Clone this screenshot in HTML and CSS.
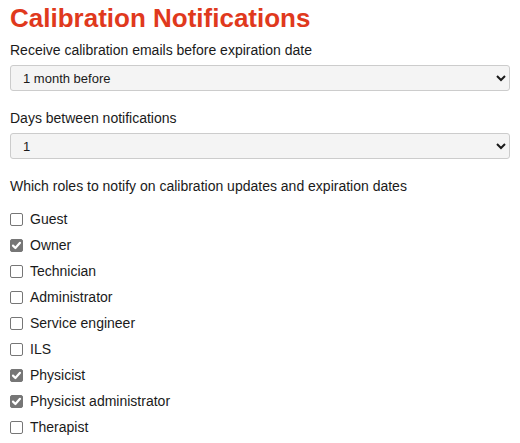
FILE: index.html
```html
<!DOCTYPE html>
<html>
<head>
<meta charset="utf-8">
<link rel="stylesheet" href="styles.css">
</head>
<body>
<div class="page">
  <h1 class="title">Calibration Notifications</h1>
  <div class="field">
    <label class="label">Receive calibration emails before expiration date</label>
    <select class="select"><option>1 month before</option></select>
  </div>
  <div class="field">
    <label class="label">Days between notifications</label>
    <select class="select"><option>1</option></select>
  </div>
  <div class="field">
    <div class="label roles-label">Which roles to notify on calibration updates and expiration dates</div>
    <ul class="roles">
      <li><span class="box"></span>Guest</li>
      <li><span class="box checked"><svg viewBox="0 0 13 13" width="13" height="13"><path d="M3 6.6 L5.4 9 L10 3.8" fill="none" stroke="#fff" stroke-width="2.2" stroke-linecap="round" stroke-linejoin="round"/></svg></span>Owner</li>
      <li><span class="box"></span>Technician</li>
      <li><span class="box"></span>Administrator</li>
      <li><span class="box"></span>Service engineer</li>
      <li><span class="box"></span>ILS</li>
      <li><span class="box checked"><svg viewBox="0 0 13 13" width="13" height="13"><path d="M3 6.6 L5.4 9 L10 3.8" fill="none" stroke="#fff" stroke-width="2.2" stroke-linecap="round" stroke-linejoin="round"/></svg></span>Physicist</li>
      <li><span class="box checked"><svg viewBox="0 0 13 13" width="13" height="13"><path d="M3 6.6 L5.4 9 L10 3.8" fill="none" stroke="#fff" stroke-width="2.2" stroke-linecap="round" stroke-linejoin="round"/></svg></span>Physicist administrator</li>
      <li><span class="box"></span>Therapist</li>
    </ul>
  </div>
</div>
</body>
</html>
```
FILE: styles.css
```css
html, body { margin: 0; padding: 0; background: #fff; }
body { font-family: "Liberation Sans", Arial, sans-serif; font-size: 14px; color: #1a1a1a; }
.page { padding: 0 10px; }
.title { margin: 3px 0 9px; font-size: 26px; font-weight: bold; color: #e0391d; line-height: 30px; }
.field { margin-bottom: 19px; }
.label { display: block; line-height: 16px; margin-bottom: 7px; }
.roles-label { margin-bottom: 12px; }
.select {
  display: block; width: 100%; height: 26px; font-family: inherit; font-size: 13px;
  background: #f4f4f4; border: 1px solid #ccc; border-radius: 3px; padding: 0 8px; color: #1a1a1a;
}
.roles { list-style: none; margin: 0; padding: 0; }
.roles li { height: 26px; display: flex; align-items: center; }
.box {
  box-sizing: border-box; width: 13px; height: 13px; margin: 1px 7px 0 0; flex: none;
  border: 1px solid #767676; border-radius: 2px; background: #fff; display: flex;
}
.box.checked { background: #767676; border-color: #767676; }
.box svg { display: block; margin: -1px; }
```
